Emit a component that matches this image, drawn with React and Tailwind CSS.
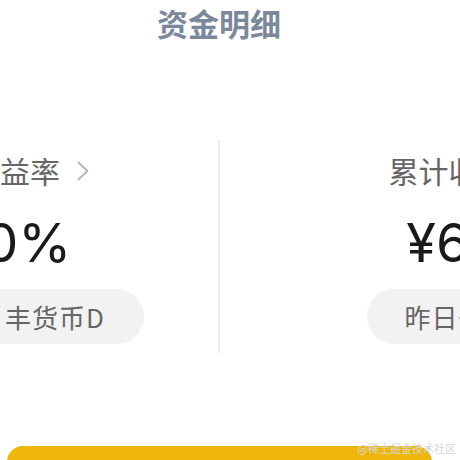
const cjk = '"Noto Sans CJK SC", "Noto Sans", sans-serif';
const num = 'Inter, "Noto Sans CJK SC", sans-serif';

function Chevron() {
    return (
        <svg className="ml-[17px] mt-[1px]" width="12" height="20" viewBox="0 0 12 20" fill="none">
            <polyline points="1.5,1.5 10.5,10 1.5,18.5" stroke="#b3b3b3" strokeWidth="1.8" strokeLinecap="round" strokeLinejoin="round" />
        </svg>
    );
}

function StatColumn({ label, arrow, value, note, pillClass, labelClass, valueClass }) {
    return (
        <div className="w-[461px] flex flex-col items-center pt-[15px] pb-[9px]">
            <div className={"flex items-center h-[30px] " + labelClass}>
                <span className="text-[30px] leading-[30px] text-[#666666]">{label}</span>
                {arrow && <Chevron />}
            </div>
            <div className={"mt-[31px] h-[54px] text-[54px] leading-[54px] text-[#1a1a1a] font-normal " + valueClass} style={{ fontFamily: num }}>
                {value}
            </div>
            <div className={"mt-[19px] h-[55px] rounded-full bg-[#f2f2f2] flex items-center text-[26px] tracking-[1px] text-[#666666] " + pillClass}>
                {note}
            </div>
        </div>
    );
}

function App() {
    return (
        <div className="w-[460px] h-[460px] overflow-hidden bg-white relative" style={{ fontFamily: cjk }}>
            <div className="w-[924px] -ml-[243px]">
                <h1 className="pt-[7px] text-center text-[31px] leading-[31px] font-bold text-[#7b889c]">资金明细</h1>
                <div className="flex mt-[102px]">
                    <StatColumn
                        label="近一年收益率"
                        arrow
                        value="2.30%"
                        note="数据来源：丰货币D"
                        pillClass="w-[313px] justify-end pr-[39px]"
                        labelClass="-ml-[6px]"
                        valueClass=""
                    />
                    <div className="w-[2px] bg-[#ececec]" />
                    <StatColumn
                        label="累计收益"
                        value="¥68"
                        note="昨日+16"
                        pillClass="w-[168px] pl-[38px]"
                        labelClass="-ml-[4px]"
                        valueClass="ml-[8px]"
                    />
                </div>
                <div className="mt-[93px] mx-auto w-[425px] h-[40px] rounded-t-[16px] bg-[#efb60a]" />
            </div>
            <span className="absolute right-[4px] bottom-[6px] text-[11px] leading-[12px] text-[#d6d6d6]">@稀土掘金技术社区</span>
        </div>
    );
}

export default App;
